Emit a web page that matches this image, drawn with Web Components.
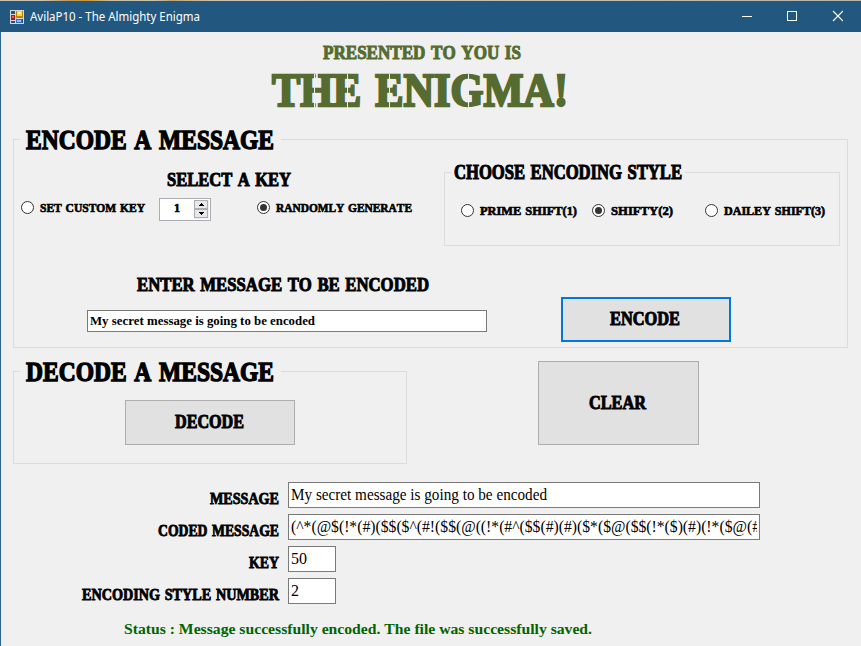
<!DOCTYPE html>
<html lang="en"><head><meta charset="utf-8"><title>AvilaP10 - The Almighty Enigma</title>
<style>html,body{margin:0;height:646px;overflow:hidden;background:#f0f0f0}</style></head>
<body><enigma-window></enigma-window>
<script>
const sheet = (css, html) => `<style>${css}</style>${html}`;

// Display lettering fitted to a given width; its box height is the cap height.
customElements.define('fit-text', class extends HTMLElement {
  connectedCallback() {
    const w = +this.getAttribute('w'), h = +this.getAttribute('h');
    const body = this.hasAttribute('fs');
    const fs = +this.getAttribute('fs') || h / 0.69;
    const plain = this.hasAttribute('plain');
    const family = this.getAttribute('family') || 'Liberation Serif';
    const text = this.textContent;
    const gap = body ? 0 : fs * .08;
    const root = this.attachShadow({mode: 'open'});
    root.innerHTML = sheet(`
      :host{display:block;flex:none;width:${w}px;height:${h}px;position:relative}
      span{display:block;width:max-content;white-space:pre;font:${plain ? 400 : 700} ${fs}px/${h}px "${family}",serif;font-kerning:none;font-variant-ligatures:none;
        word-spacing:${gap}px;transform-origin:0 50%;${body ? '' : `-webkit-text-stroke:${fs * .05}px currentColor`}}
      i{position:absolute;background:var(--paper,#f0f0f0)}`, '<span></span>');
    const span = root.querySelector('span');
    span.textContent = text;
    const ctx = document.createElement('canvas').getContext('2d');
    ctx.font = `${plain ? 400 : 700} ${fs}px "${family}"`;
    ctx.fontKerning = 'none';
    const total = span.getBoundingClientRect().width, k = w / total;
    span.style.transform = `scaleX(${k})`;
    // Stencil bridges: slim gaps beside stems and through round letters.
    if (this.hasAttribute('bridges')) {
      const at = {E: .475, H: .405, G: .52};
      let x = 0;
      for (const c of text) {
        const a = ctx.measureText(c).width + (c === ' ' ? gap : 0);
        if (at[c]) {
          const el = document.createElement('i');
          el.style.cssText = `left:${(x + a * at[c]) * k}px;top:-1px;height:${h + 2}px;width:1.5px`;
          root.append(el);
        }
        x += a;
      }
    }
  }
});

customElements.define('title-bar', class extends HTMLElement {
  connectedCallback() {
    this.attachShadow({mode: 'open'}).innerHTML = sheet(`
      :host{display:flex;align-items:center;box-sizing:border-box;height:32px;padding:1px 18px 0 9px;background:#22587f;color:#fff;
        border-top:1px solid #b9b7ab;border-image:linear-gradient(90deg,#c9c3b5 0 5%,#b99c5f 8%,#c99535 10%,#c7bda5 13%,#c9c3b5 18%,#bda675 20%,#c9c3b5 25%,#b5b5b0) 1}
      .app{margin:-1px 6px 0 1px}fit-text{margin-top:-1px}.gap{flex:1}.b{display:block;flex:none;margin-top:-2px}`, `
      <svg class="app" width="14" height="14" shape-rendering="crispEdges"><path fill="#d5d7d9" d="M0 0h14v14H0z"/><path fill="#22587f" d="M1 1h4v3H1zM1 11h4v2H1zM6 9h7v4H6z"/><path fill="#b8860b" d="M6 1h7v7H6z"/><path fill="#ffd43a" d="M7 1h5v5H7z"/><path fill="#fff0a0" d="M8 2h3v2H8z"/><path fill="#b81510" d="M1 5h4v5H1z"/><path fill="#ef5b45" d="M2 6h2v2H2z"/><path fill="#2c6fd0" d="M6 9h6v4H6z"/><path fill="#8dbcff" d="M7 10h4v2H7z"/></svg>
      <fit-text plain family="Noto Sans" fs="12" w="170" h="16">AvilaP10 - The Almighty Enigma</fit-text><div class="gap"></div>
      <svg class="b" width="101" height="12"><path stroke="#fff" d="M0 6.5h10"/><rect x="45.5" y="1.5" width="9" height="9" fill="none" stroke="#fff"/><path stroke="#fff" stroke-width="1.1" d="M91 1l10 10M101 1L91 11"/></svg>`);
  }
});

customElements.define('group-box', class extends HTMLElement {
  connectedCallback() {
    const a = n => this.getAttribute(n);
    this.attachShadow({mode: 'open'}).innerHTML = sheet(`
      :host{display:block;flex:none;width:${a('w')}px;height:${a('h')}px}
      fieldset{box-sizing:border-box;width:100%;height:100%;min-width:0;margin:0;padding:0;border:1px solid #dcdcdc}
      legend{margin:0 0 0 6px;padding:0 ${a('pr')}px 0 ${a('pl')}px}`,
      `<fieldset><legend><fit-text w="${a('tw')}" h="${a('th')}">${a('label')}</fit-text></legend><slot></slot></fieldset>`);
  }
});

customElements.define('radio-option', class extends HTMLElement {
  connectedCallback() {
    const on = this.hasAttribute('checked');
    this.attachShadow({mode: 'open'}).innerHTML = sheet(`
      :host{display:flex;align-items:center;gap:6px;height:13px;flex:none}svg{display:block;flex:none}`, `
      <svg width="13" height="13"><circle cx="6.5" cy="6.5" r="6" fill="#fff" stroke="#333"/>${on ? '<circle cx="6.5" cy="6.5" r="3.5" fill="#333"/>' : ''}</svg><slot></slot>`);
  }
});

customElements.define('push-button', class extends HTMLElement {
  connectedCallback() {
    const a = n => this.getAttribute(n), d = this.hasAttribute('default');
    this.attachShadow({mode: 'open'}).innerHTML = sheet(`
      :host{display:flex;align-items:center;justify-content:center;flex:none;box-sizing:border-box;width:${a('w')}px;height:${a('h')}px;
        background:#e1e1e1;border:${d ? '2px solid #0078d7' : '1px solid #adadad'};padding:0 2px 2px 0}`, '<slot></slot>');
  }
});

customElements.define('text-field', class extends HTMLElement {
  connectedCallback() {
    const a = n => this.getAttribute(n);
    this.attachShadow({mode: 'open'}).innerHTML = sheet(`
      :host{display:block;flex:none;box-sizing:border-box;width:${a('w')}px;height:${a('h')}px;background:#fff;border:1px solid #7a7a7a;padding:0 2px}
      div{overflow:hidden;height:100%}`, '<div><slot></slot></div>');
  }
});

customElements.define('number-spinner', class extends HTMLElement {
  connectedCallback() {
    this.attachShadow({mode: 'open'}).innerHTML = sheet(`
      :host{display:flex;align-items:center;flex:none;box-sizing:border-box;width:52px;height:23px;background:#fff;border:1px solid #abadb3;padding:1px 1px 1px 14px;justify-content:space-between}
      svg{display:block}.n{padding-bottom:4px}`, `
      <div class="n"><fit-text w="6" h="9">1</fit-text></div>
      <svg width="15" height="19" shape-rendering="crispEdges"><path fill="#f0f0f0" d="M0 0h15v19H0z"/><path fill="#e8e8e8" stroke="#adadad" d="M.5.5h13v8H.5zM.5 9.5h13v8H.5z"/><path d="M7 3h1v1h1v1h1v1H5V5h1V4h1zM5 12h5v1H9v1H8v1H7v-1H6v-1H5z"/></svg>`);
  }
});

customElements.define('result-row', class extends HTMLElement {
  connectedCallback() {
    const a = n => this.getAttribute(n);
    this.attachShadow({mode: 'open'}).innerHTML = sheet(`
      :host{display:grid;grid-template-columns:278px auto;column-gap:9px;height:26px}
      .l{display:flex;justify-content:flex-end;padding-top:11px}`, `
      <div class="l"><fit-text w="${a('lw')}" h="11">${a('label')}</fit-text></div>
      <text-field w="${a('fw')}" h="26"><fit-text plain fs="16" w="${a('tw')}" h="24">${a('value')}</fit-text></text-field>`);
  }
});

customElements.define('enigma-window', class extends HTMLElement {
  connectedCallback() {
    this.attachShadow({mode: 'open'}).innerHTML = sheet(`
      :host{display:block;width:861px;height:646px;background:#f0f0f0;color:#000}
      main{box-sizing:border-box;height:614px;border-left:1px solid #2d6692;display:flex;flex-direction:column}
      header{height:98px;padding-top:14px;box-sizing:border-box;color:#556b2f}
      header fit-text:first-child{margin-left:322px}header fit-text:last-child{margin:15px 0 0 271px}
      .enc{margin-left:12px}
      .top{display:flex;height:97px;padding-top:16px;box-sizing:border-box}
      .key{width:430px;padding:8px 0 0 7px;box-sizing:border-box}
      .key>fit-text{margin-left:146px}
      .row{display:flex;align-items:center}
      .key .row{height:23px;margin-top:9px}
      .styles{padding:24px 0 0 16px}
      .send{display:flex;padding:51px 0 0 73px}
      .send>div{width:474px;padding-top:0}.send text-field{margin-top:18px}
      .send .t{margin:-19px 0 0 50px}
      .mid{display:flex;height:109px;padding-left:12px}
      .mid>push-button{margin:-1px 0 0 131px}
      .dec{padding:19px 0 0 111px}
      .results{display:grid;row-gap:6px;margin-top:11px}
      footer{margin:16px 0 0 123px;color:#006400}`, `
      <title-bar></title-bar>
      <main>
        <header><fit-text w="198" h="13.5">PRESENTED TO YOU IS</fit-text><fit-text bridges w="296" h="32">THE ENIGMA!</fit-text></header>
        <group-box class="enc" label="ENCODE A MESSAGE" w="835" h="218" tw="248" th="19" pl="6" pr="7">
          <div class="top">
            <div class="key"><fit-text w="124" h="13.5">SELECT A KEY</fit-text>
              <div class="row">
                <radio-option><fit-text w="105" h="9">SET CUSTOM KEY</fit-text></radio-option>
                <number-spinner style="margin:4px 0 0 14px"></number-spinner>
                <radio-option checked style="margin-left:46px"><fit-text w="136" h="9">RANDOMLY GENERATE</fit-text></radio-option>
              </div></div>
            <group-box label="CHOOSE ENCODING STYLE" w="396" h="81" tw="228" th="15" pl="3" pr="3">
              <div class="row styles">
                <radio-option><fit-text w="97" h="9">PRIME SHIFT(1)</fit-text></radio-option>
                <radio-option checked style="margin-left:15px"><fit-text w="62" h="9">SHIFTY(2)</fit-text></radio-option>
                <radio-option style="margin-left:32px"><fit-text w="101" h="9">DAILEY SHIFT(3)</fit-text></radio-option>
              </div></group-box>
          </div>
          <div class="send">
            <div><fit-text class="t" w="292" h="13.5">ENTER MESSAGE TO BE ENCODED</fit-text>
              <text-field w="400" h="22"><fit-text fs="13" w="225" h="20">My secret message is going to be encoded</fit-text></text-field></div>
            <push-button default w="170" h="45"><fit-text w="70" h="13.5">ENCODE</fit-text></push-button>
          </div>
        </group-box>
        <div style="height:14px;flex:none"></div>
        <div class="mid">
          <group-box label="DECODE A MESSAGE" w="394" h="102" tw="248" th="19" pl="6" pr="7">
            <div class="dec"><push-button w="170" h="45"><fit-text w="69" h="13.5">DECODE</fit-text></push-button></div></group-box>
          <push-button w="161" h="84" style="padding-bottom:0"><fit-text w="57" h="13.5">CLEAR</fit-text></push-button>
        </div>
        <div class="results">
          <result-row label="MESSAGE" lw="69" fw="472" tw="256" value="My secret message is going to be encoded"></result-row>
          <result-row label="CODED MESSAGE" lw="121" fw="472" tw="469" value="(^*(@$(!*(#)($$($^(#!($$(@((!*(#^($$(#)(#)($*($@($$(!*($)(#)(!*($@(#"></result-row>
          <result-row label="KEY" lw="30" fw="48" tw="16" value="50"></result-row>
          <result-row label="ENCODING STYLE NUMBER" lw="197" fw="48" tw="8" value="2"></result-row>
        </div>
        <footer><fit-text fs="15" w="468" h="18">Status : Message successfully encoded. The file was successfully saved.</fit-text></footer>
      </main>`);
  }
});
</script></body></html>
